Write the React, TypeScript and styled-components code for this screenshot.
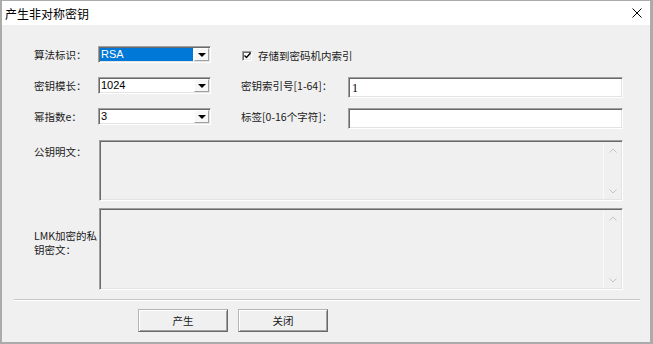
import React from 'react'
import styled, { createGlobalStyle } from 'styled-components'

const GlobalStyle = createGlobalStyle`
	html, body {
		margin: 0;
		padding: 0;
		background: #f0f0f0;
	}
	body {
		font-family: 'Noto Sans CJK SC', 'Noto Sans', sans-serif;
		color: #1a1a1a;
	}
`

const Window = styled.div`
	width: 653px;
	height: 344px;
	box-sizing: border-box;
	border-style: solid;
	border-color: #ababab;
	border-width: 1px 3px 2px 2px;
	background: #f0f0f0;
	display: flex;
	flex-direction: column;
`

const TitleBar = styled.div`
	flex: none;
	height: 24px;
	background: #fff;
	display: flex;
	align-items: center;
	justify-content: space-between;
	padding: 0 8px 0 3px;
`

const Title = styled.span`
	font-size: 12px;
	color: #000;
`

const CloseButton = styled.button`
	border: 0;
	background: transparent;
	padding: 0;
	width: 10px;
	height: 10px;
	display: flex;
`

const Body = styled.div`
	flex: 1;
	display: flex;
	flex-direction: column;
	padding: 21px 10px 10px 12px;
`

const FormGrid = styled.div`
	display: grid;
	grid-template-columns: 64px 113px 30px 107px 275px;
	grid-auto-rows: 21px;
	row-gap: 10px;
	margin-left: 20px;
	align-items: start;
`

const Label = styled.span<{ $col?: number }>`
	grid-column: ${p => p.$col ?? 1};
	font-size: 10.5px;
	line-height: 17px;
	white-space: nowrap;
`

const sunken = `
	box-sizing: border-box;
	border: 1px solid;
	border-color: #a0a0a0 #fff #fff #a0a0a0;
	box-shadow: inset 1px 1px 0 #696969, inset -1px -1px 0 #e3e3e3;
`

const Combo = styled.div`
	${sunken}
	grid-column: 2;
	width: 113px;
	height: 17px;
	padding: 1px;
	display: flex;
	gap: 1px;
	background: #fff;
`

const ComboValue = styled.span<{ $selected?: boolean }>`
	flex: 1;
	font-family: 'Liberation Sans', sans-serif;
	font-size: 11px;
	line-height: 13px;
	padding-left: 1px;
	background: ${p => (p.$selected ? '#0078d7' : 'transparent')};
	color: ${p => (p.$selected ? '#fff' : '#000')};
`

const DropButton = styled.span`
	width: 15px;
	box-sizing: border-box;
	background: #f7f7f7;
	border: 1px solid;
	border-color: #fff #a0a0a0 #a0a0a0 #fff;
	display: flex;
	align-items: center;
	justify-content: center;
	&::after {
		content: '';
		border-left: 4px solid transparent;
		border-right: 4px solid transparent;
		border-top: 4px solid #000;
	}
`

const CheckLabel = styled.label`
	grid-column: 4 / span 2;
	margin-left: 1px;
	height: 17px;
	display: flex;
	align-items: center;
	gap: 6px;
	font-size: 10.5px;
	padding-top: 1px;
`

const CheckBox = styled.span`
	${sunken}
	width: 10px;
	height: 10px;
	background: #fff;
	display: flex;
	align-items: center;
	justify-content: center;
`

const TextInput = styled.div`
	${sunken}
	grid-column: 5;
	height: 21px;
	background: #fff;
	padding: 2px 3px;
	font-family: 'Liberation Serif', serif;
	font-size: 12px;
	line-height: 16px;
	color: #000;
`

const AreaGrid = styled.div`
	display: grid;
	grid-template-columns: 65px 524px;
	grid-template-rows: 61px 82px;
	row-gap: 7px;
	margin: 11px 0 0 20px;
`

const AreaLabel = styled.span<{ $top: number }>`
	font-size: 10.5px;
	line-height: 14px;
	padding-top: ${p => p.$top}px;
`

const TextBox = styled.div`
	${sunken}
	display: flex;
	justify-content: flex-end;
	padding: 2px 1px 1px 2px;
	background: #f0f0f0;
`

const ScrollBar = styled.div`
	width: 17px;
	border-left: 1px solid #f9f9f9;
	display: flex;
	flex-direction: column;
	justify-content: space-between;
	align-items: center;
	padding: 5px 0 5px;
`

const Separator = styled.div`
	margin-top: 9px;
	height: 0;
	border-top: 1px solid #c8c8c8;
	border-bottom: 1px solid #fff;
`

const ButtonRow = styled.div`
	display: flex;
	gap: 10px;
	margin-top: 8px;
	padding-left: 124px;
`

const Button = styled.button`
	width: 90px;
	height: 23px;
	box-sizing: border-box;
	background: #f0f0f0;
	border: 1px solid;
	border-color: #b4b4b4 #696969 #696969 #b4b4b4;
	box-shadow: inset 1px 1px 0 #fff, inset -1px -1px 0 #a0a0a0;
	font-family: 'Noto Sans CJK SC', sans-serif;
	font-size: 10.5px;
	color: #1a1a1a;
	padding: 0;
`

const Chevron = ({ up }: { up?: boolean }) => (
	<svg width="8" height="5" viewBox="0 0 8 5">
		<polyline
			points={up ? '0.5,4.5 4,1 7.5,4.5' : '0.5,0.5 4,4 7.5,0.5'}
			fill="none"
			stroke="#c4c4c4"
			strokeWidth="1"
		/>
	</svg>
)

const ComboBox = ({ value, selected }: { value: string; selected?: boolean }) => (
	<Combo>
		<ComboValue $selected={selected}>{value}</ComboValue>
		<DropButton />
	</Combo>
)

const ScrollArea = () => (
	<TextBox>
		<ScrollBar>
			<Chevron up />
			<Chevron />
		</ScrollBar>
	</TextBox>
)

export default function App() {
	return (
		<>
			<GlobalStyle />
			<Window>
				<TitleBar>
					<Title>产生非对称密钥</Title>
					<CloseButton>
						<svg width="10" height="10" viewBox="0 0 10 10">
							<path d="M0.5 0.5L9.5 9.5M9.5 0.5L0.5 9.5" stroke="#000" strokeWidth="1" />
						</svg>
					</CloseButton>
				</TitleBar>
				<Body>
					<FormGrid>
						<Label>算法标识：</Label>
						<ComboBox value="RSA" selected />
						<CheckLabel>
							<CheckBox>
								<svg width="7" height="7" viewBox="0 0 7 7">
									<path d="M0.5 3.5L2.5 5.5L6.5 1" fill="none" stroke="#000" strokeWidth="1.4" />
								</svg>
							</CheckBox>
							存储到密码机内索引
						</CheckLabel>

						<Label>密钥模长：</Label>
						<ComboBox value="1024" />
						<Label $col={4}>密钥索引号[1-64]：</Label>
						<TextInput>1</TextInput>

						<Label>幂指数e：</Label>
						<ComboBox value="3" />
						<Label $col={4}>标签[0-16个字符]：</Label>
						<TextInput />
					</FormGrid>

					<AreaGrid>
						<AreaLabel $top={5}>公钥明文：</AreaLabel>
						<ScrollArea />
						<AreaLabel $top={21}>
							LMK加密的私
							<br />
							钥密文：
						</AreaLabel>
						<ScrollArea />
					</AreaGrid>

					<Separator />

					<ButtonRow>
						<Button>产生</Button>
						<Button>关闭</Button>
					</ButtonRow>
				</Body>
			</Window>
		</>
	)
}
